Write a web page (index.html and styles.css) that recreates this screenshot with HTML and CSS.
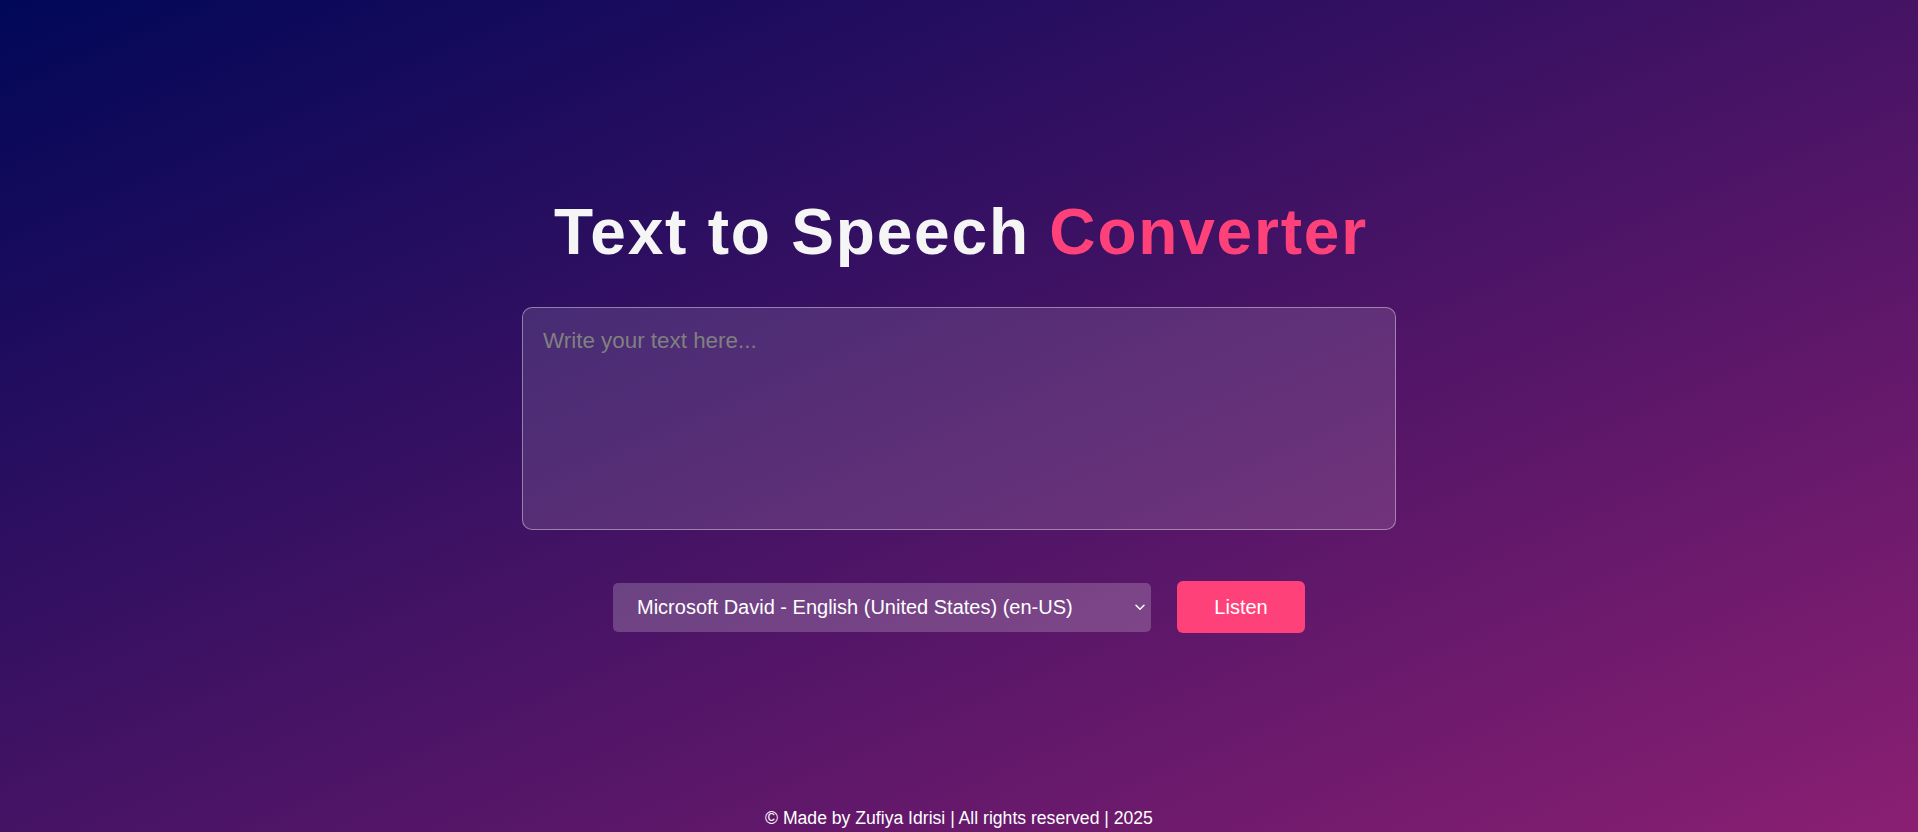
FILE: index.html
```html
<!DOCTYPE html>
<html lang="en">
<head>
<meta charset="UTF-8">
<title>Text to Speech Converter</title>
<link rel="stylesheet" href="styles.css">
</head>
<body>
  <main class="hero">
    <h1 class="title">Text to Speech <span class="accent">Converter</span></h1>
    <textarea class="input" placeholder="Write your text here..."></textarea>
    <div class="controls">
      <div class="select-wrap">
        <select class="voice">
          <option>Microsoft David - English (United States) (en-US)</option>
        </select>
        <svg class="chev" width="10" height="7" viewBox="0 0 10 7"><path d="M1 1.2 L5 5.2 L9 1.2" fill="none" stroke="#fff" stroke-width="1.5" stroke-linecap="round" stroke-linejoin="round"/></svg>
      </div>
      <button class="listen">Listen</button>
    </div>
  </main>
  <footer class="footer">© Made by Zufiya Idrisi | All rights reserved | 2025</footer>
</body>
</html>
```

FILE: styles.css
```css
* { box-sizing: border-box; }
html, body { margin: 0; padding: 0; }
body {
  min-height: 100vh;
  display: flex;
  flex-direction: column;
  font-family: "Liberation Sans", Arial, sans-serif;
  color: #fff;
  background: linear-gradient(to right bottom, #010758, #8a1f72);
  background-attachment: fixed;
}
.hero {
  flex: 1;
  display: flex;
  flex-direction: column;
  align-items: center;
  padding-top: 195px;
}
.title {
  margin: 0 0 0 4px;
  font-size: 64px;
  font-weight: 700;
  letter-spacing: 1.8px;
  color: #f5f5f5;
  line-height: 74px;
}
.accent { color: #ff417a; }
.input {
  margin-top: 38px;
  width: 874px;
  height: 223px;
  resize: none;
  padding: 20px 20px;
  font-family: "Liberation Sans", Arial, sans-serif;
  font-size: 22.4px;
  color: #fff;
  background: rgba(255, 255, 255, 0.12);
  border: 1px solid rgba(255, 255, 255, 0.4);
  border-radius: 10px;
  outline: none;
}
.input::placeholder { color: #808080; }
.controls {
  margin-top: 51px;
  display: flex;
  align-items: center;
  gap: 26px;
}
.select-wrap { position: relative; }
.voice {
  appearance: none;
  -webkit-appearance: none;
  width: 538px;
  height: 49px;
  padding: 0 24px 0 24px;
  font-family: "Liberation Sans", Arial, sans-serif;
  font-size: 20px;
  color: #fff;
  background: rgba(255, 255, 255, 0.2);
  border: none;
  border-radius: 5px;
  outline: none;
}
.voice option { color: #000; }
.chev {
  position: absolute;
  right: 6px;
  top: 21px;
  pointer-events: none;
}
.listen {
  width: 128px;
  height: 52px;
  font-family: "Liberation Sans", Arial, sans-serif;
  font-size: 20px;
  color: #fff;
  background: #ff417a;
  border: none;
  border-radius: 6px;
}
.footer {
  text-align: center;
  font-size: 17.6px;
  padding-bottom: 3px;
  color: #fff;
}
```
